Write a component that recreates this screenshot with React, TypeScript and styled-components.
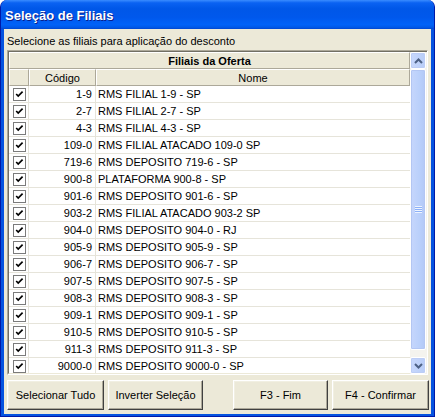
import React, { FC } from "react";
import styled, { createGlobalStyle } from "styled-components";

interface Filial {
  codigo: string;
  nome: string;
}

const filiais: Filial[] = [
  { codigo: "1-9", nome: "RMS FILIAL 1-9 - SP" },
  { codigo: "2-7", nome: "RMS FILIAL 2-7 - SP" },
  { codigo: "4-3", nome: "RMS FILIAL 4-3 - SP" },
  { codigo: "109-0", nome: "RMS FILIAL ATACADO 109-0 SP" },
  { codigo: "719-6", nome: "RMS DEPOSITO 719-6 - SP" },
  { codigo: "900-8", nome: "PLATAFORMA 900-8 - SP" },
  { codigo: "901-6", nome: "RMS DEPOSITO 901-6 - SP" },
  { codigo: "903-2", nome: "RMS FILIAL ATACADO 903-2 SP" },
  { codigo: "904-0", nome: "RMS DEPOSITO 904-0 - RJ" },
  { codigo: "905-9", nome: "RMS DEPOSITO 905-9 - SP" },
  { codigo: "906-7", nome: "RMS DEPOSITO 906-7 - SP" },
  { codigo: "907-5", nome: "RMS DEPOSITO 907-5 - SP" },
  { codigo: "908-3", nome: "RMS DEPOSITO 908-3 - SP" },
  { codigo: "909-1", nome: "RMS DEPOSITO 909-1 - SP" },
  { codigo: "910-5", nome: "RMS DEPOSITO 910-5 - SP" },
  { codigo: "911-3", nome: "RMS DEPOSITO 911-3 - SP" },
  { codigo: "9000-0", nome: "RMS DEPOSITO 9000-0 - SP" },
];

const GlobalStyle = createGlobalStyle`
  body {
    margin: 0;
    background: #fff;
    font-family: "Liberation Sans", Arial, sans-serif;
    font-size: 11px;
    color: #000;
  }
`;

const CheckBox: FC = () => (
  <svg width="13" height="13" viewBox="0 0 13 13">
    <rect x="0.5" y="0.5" width="12" height="12" fill="#fff" stroke="#7b7b7b" />
    <path d="M3.2 6 L5.2 8 L9.6 3.6" fill="none" stroke="#000" strokeWidth="1.7" />
  </svg>
);

const Arrow: FC<{ down?: boolean }> = ({ down }) => (
  <svg width="9" height="6" viewBox="0 0 9 6">
    <path
      d={down ? "M1 1 L4.5 4.5 L8 1" : "M1 5 L4.5 1.5 L8 5"}
      fill="none"
      stroke="#4d6185"
      strokeWidth="2"
    />
  </svg>
);

const App: FC = () => {
  return (
    <>
      <GlobalStyle />
      <Window>
        <TitleBar>Seleção de Filiais</TitleBar>
        <Client>
          <Label>Selecione as filiais para aplicação do desconto</Label>
          <Grid>
            <Table>
              <HeaderRow>
                <HeadCell $grow>
                  <b>Filiais da Oferta</b>
                </HeadCell>
              </HeaderRow>
              <HeaderRow>
                <HeadCell $w={20} />
                <HeadCell $w={67}>Código</HeadCell>
                <HeadCell $grow>Nome</HeadCell>
              </HeaderRow>
              {filiais.map((f) => (
                <Row key={f.codigo}>
                  <CheckCell>
                    <CheckBox />
                  </CheckCell>
                  <CodeCell>{f.codigo}</CodeCell>
                  <NameCell>{f.nome}</NameCell>
                </Row>
              ))}
            </Table>
            <ScrollBar>
              <ArrowButton>
                <Arrow />
              </ArrowButton>
              <Thumb>
                <Grip />
              </Thumb>
              <Track />
              <ArrowButton>
                <Arrow down />
              </ArrowButton>
            </ScrollBar>
          </Grid>
          <ButtonBar>
            <ButtonGroup>
              <Button $w={97}>Selecionar Tudo</Button>
              <Button $w={95}>Inverter Seleção</Button>
            </ButtonGroup>
            <ButtonGroup>
              <Button $w={95}>F3 - Fim</Button>
              <Button $w={97}>F4 - Confirmar</Button>
            </ButtonGroup>
          </ButtonBar>
        </Client>
      </Window>
    </>
  );
};

const Window = styled.div`
  width: 435px;
  height: 417px;
  box-sizing: border-box;
  display: flex;
  flex-direction: column;
  background: #0553e0;
  border: 1px solid #0019a8;
  border-top: none;
  border-radius: 7px 7px 0 0;
  overflow: hidden;
`;

const TitleBar = styled.div`
  height: 29px;
  flex: none;
  display: flex;
  align-items: center;
  padding: 2px 0 0 5px;
  box-sizing: border-box;
  margin: 0 -1px;
  background: linear-gradient(
    to bottom,
    #3a8cff 0%,
    #0a62f2 10%,
    #0057e8 30%,
    #0058ec 60%,
    #0062f8 85%,
    #0059e8 94%,
    #0046d0 100%
  );
  color: #fff;
  font-family: "Liberation Sans", Arial, sans-serif;
  font-weight: bold;
  font-size: 13px;
  text-shadow: 1px 1px #0a1e8c;
`;

const Client = styled.div`
  flex: 1;
  display: flex;
  flex-direction: column;
  margin: 0 3px 3px 3px;
  padding: 0 2px 4px 3px;
  background: #ece9d8;
`;

const Label = styled.div`
  margin-top: 5px;
  height: 15px;
  line-height: 14px;
`;

const Grid = styled.div`
  display: flex;
  height: 325px;
  margin: 1px 1px 0 0;
  box-sizing: border-box;
  border: 1px solid;
  border-color: #aca899 #fff #fff #aca899;
  background: #fff;
`;

const Table = styled.div`
  flex: 1;
  display: flex;
  flex-direction: column;
  border: 1px solid;
  border-color: #716f64 #ece9d8 #ece9d8 #716f64;
  border-right: none;
  overflow: hidden;
`;

const HeaderRow = styled.div`
  display: flex;
  height: 17px;
  flex: none;
`;

const HeadCell = styled.div<{ $w?: number; $grow?: boolean }>`
  width: ${(p) => (p.$w ? `${p.$w}px` : "auto")};
  flex: ${(p) => (p.$grow ? "1" : "none")};
  box-sizing: border-box;
  background: #ece9d8;
  border-top: 1px solid #fff;
  border-left: 1px solid #fff;
  border-right: 1px solid #aca899;
  border-bottom: 1px solid #aca899;
  display: flex;
  align-items: center;
  justify-content: center;
  line-height: 14px;
  b {
    font-weight: bold;
  }
`;

const Row = styled.div`
  display: flex;
  height: 17px;
  flex: none;
  box-sizing: border-box;
  border-bottom: 1px solid #e6e4da;
  line-height: 16px;
`;

const CheckCell = styled.div`
  width: 20px;
  flex: none;
  box-sizing: border-box;
  border-right: 1px solid #e6e4da;
  display: flex;
  align-items: center;
  justify-content: center;
  padding-left: 1px;
  svg {
    display: block;
  }
`;

const CodeCell = styled.div`
  width: 67px;
  flex: none;
  box-sizing: border-box;
  border-right: 1px solid #e6e4da;
  text-align: right;
  padding-right: 3px;
`;

const NameCell = styled.div`
  flex: 1;
  padding-left: 2px;
  white-space: nowrap;
`;

const ScrollBar = styled.div`
  width: 17px;
  flex: none;
  display: flex;
  flex-direction: column;
  background: #f4f3ee;
  border-top: 1px solid #716f64;
`;

const ArrowButton = styled.div`
  height: 17px;
  flex: none;
  box-sizing: border-box;
  margin: 0 1px 0 0;
  border: 1px solid #fff;
  border-radius: 2px;
  background: linear-gradient(to right, #c8d8fc, #b8cdf8);
  display: flex;
  align-items: center;
  justify-content: center;
  box-shadow: inset 0 0 0 1px #bccdf6;
`;

const Thumb = styled.div`
  height: 281px;
  flex: none;
  box-sizing: border-box;
  margin: 0 1px 0 0;
  border: 1px solid #fff;
  border-radius: 2px;
  background: linear-gradient(to right, #c6d6fc, #bad0fb 60%, #b2c8f6);
  box-shadow: inset 0 0 0 1px #b3c6f3;
  display: flex;
  align-items: center;
  justify-content: center;
`;

const Grip = styled.div`
  width: 7px;
  height: 7px;
  background: repeating-linear-gradient(
    to bottom,
    #eef4fe 0px,
    #eef4fe 1px,
    #8cb0f8 1px,
    #8cb0f8 2px
  );
`;

const Track = styled.div`
  flex: 1;
`;

const ButtonBar = styled.div`
  display: flex;
  justify-content: space-between;
  margin-top: 5px;
`;

const ButtonGroup = styled.div`
  display: flex;
  gap: 4px;
`;

const Button = styled.button<{ $w: number }>`
  width: ${(p) => p.$w}px;
  height: 30px;
  box-sizing: border-box;
  padding: 0;
  background: #ece9d8;
  font-family: "Liberation Sans", Arial, sans-serif;
  font-size: 11px;
  color: #000;
  border: 1px solid;
  border-color: #fff #404040 #404040 #fff;
  box-shadow: inset -1px -1px #aca899, inset 1px 1px #f1efe2;
  border-radius: 0;
`;

export default App;
